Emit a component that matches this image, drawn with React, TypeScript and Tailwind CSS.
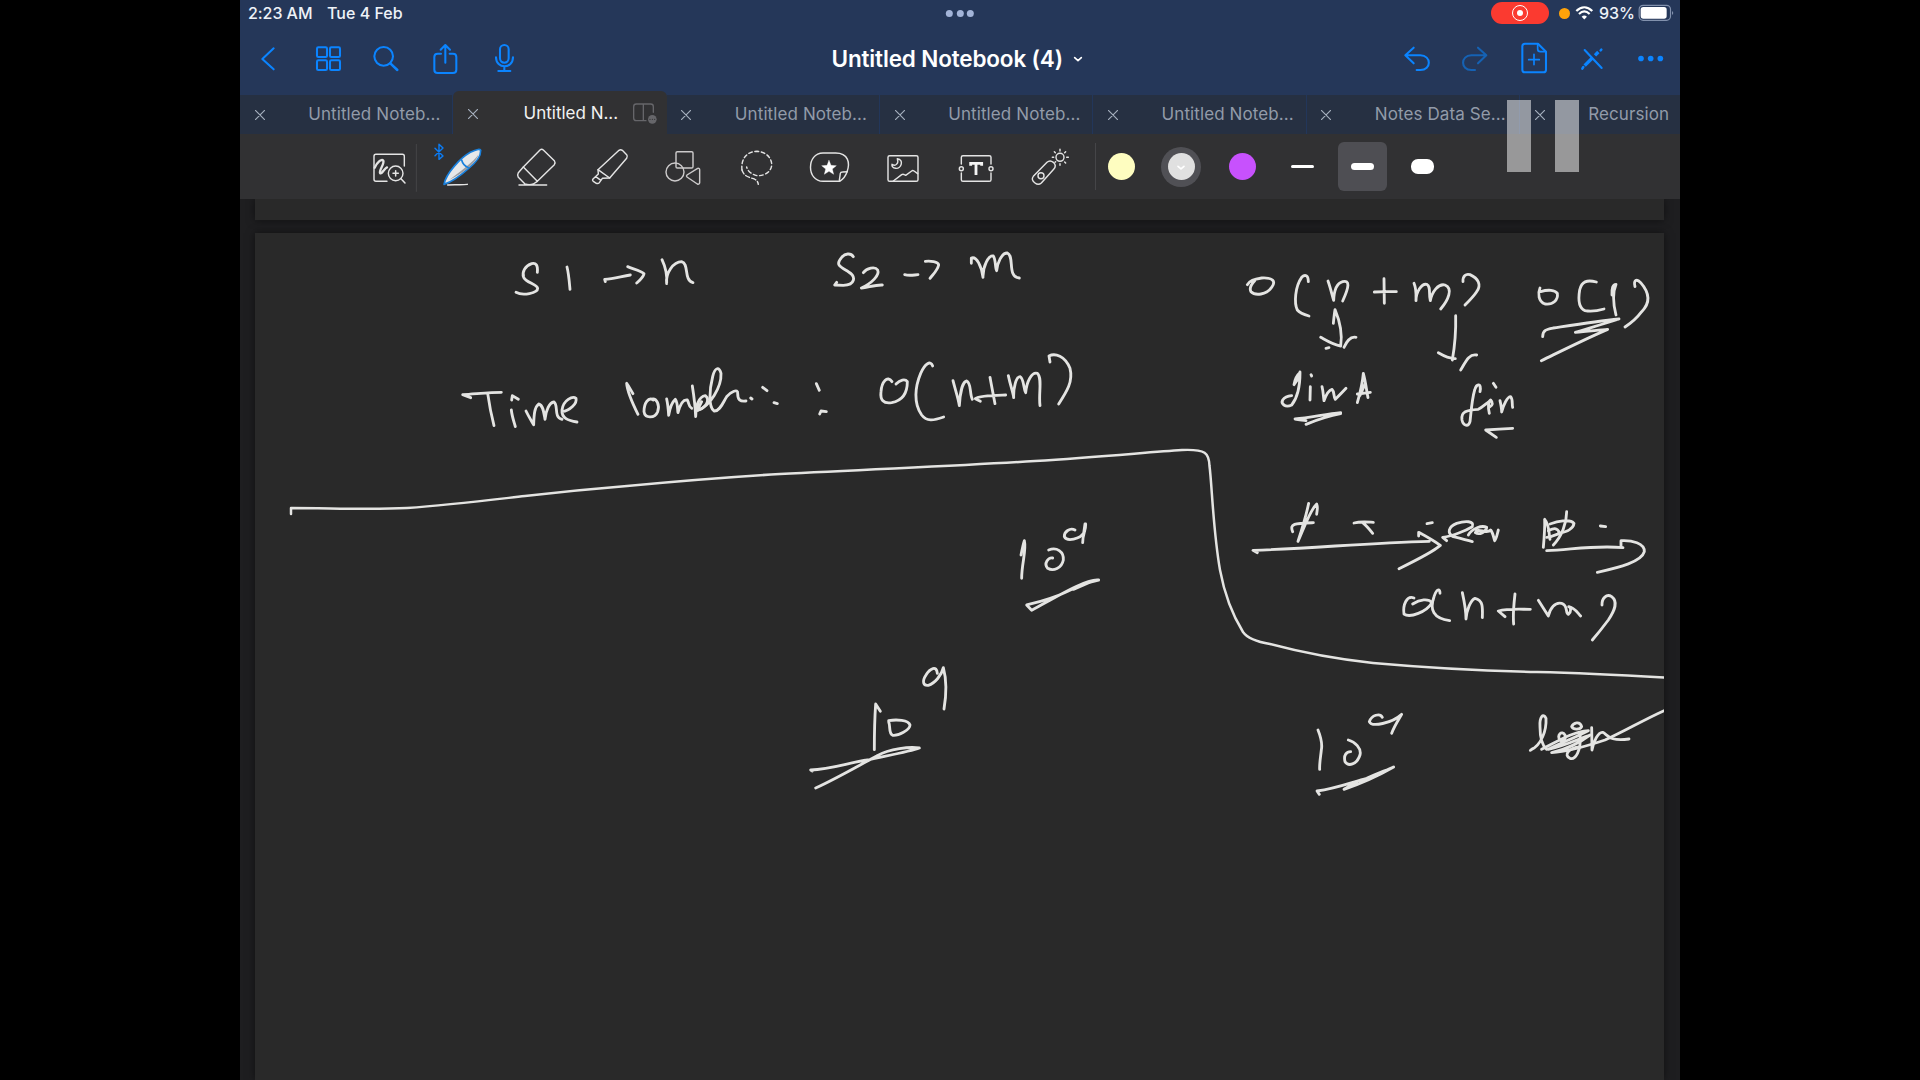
import React from "react";

type IconProps = { box: string; className: string; children: React.ReactNode };

function Glyph({ box, className, children }: IconProps) {
  return (
    <svg
      viewBox={box}
      className={className}
      fill="none"
      stroke="currentColor"
      strokeLinecap="round"
      strokeLinejoin="round"
    >
      {children}
    </svg>
  );
}

function NavIcon({ x, dim, children }: { x: number; dim?: boolean; children: React.ReactNode }) {
  return (
    <button className={dim ? "shrink-0 text-[#1562b4]" : "shrink-0 text-[#0b84ff]"}>
      <Glyph box={`${x} 90 176 195`} className="block h-[65px] w-[58.667px]">
        <g strokeWidth="6.2">{children}</g>
      </Glyph>
    </button>
  );
}

function Tool({ x, children }: { x: number; children: React.ReactNode }) {
  return (
    <button className="shrink-0 text-[#e4e4e4]">
      <Glyph box={`${x} 402 220 195`} className="block h-[65px] w-[73.333px]">
        <g strokeWidth="4.3">{children}</g>
      </Glyph>
    </button>
  );
}

function StatusBar() {
  return (
    <div className="relative flex h-[27px] items-center pb-[1px] text-[16px] font-medium text-[#eef2f8]">
      <span className="ml-[8px] w-[79px] tracking-[-0.05px]">2:23 AM</span>
      <span className="tracking-[0.02px]">Tue 4 Feb</span>
      <div className="absolute top-[10px] left-1/2 flex -translate-x-1/2 gap-[3.7px]">
        <i className="size-[7px] rounded-full bg-[#a3b4d8]" />
        <i className="size-[7px] rounded-full bg-[#a3b4d8]" />
        <i className="size-[7px] rounded-full bg-[#a3b4d8]" />
      </div>
      <div className="ml-auto flex items-center pr-[6px]">
        <div className="flex h-[22px] w-[58px] items-center justify-center rounded-full bg-[#fb3a30]">
          <span className="flex size-[16px] items-center justify-center rounded-full border-[1.7px] border-white">
            <i className="size-[6px] rounded-full bg-white" />
          </span>
        </div>
        <i className="ml-[10px] size-[11px] rounded-full bg-[#ffa30a]" />
        <Glyph box="1124 15 56 46" className="ml-[5px] h-[15.3px] w-[18.6px] text-white">
          <g strokeWidth="6.5" strokeLinecap="butt">
            <path d="M1128 33 C1143 18 1161 18 1176 33" />
            <path d="M1136 42 C1146 32 1158 32 1168 42" />
          </g>
          <path d="M1144 50 C1149 45 1155 45 1160 50 L1152 59 Z" fill="currentColor" stroke="none" />
        </Glyph>
        <span className="ml-[5px] w-[35px] text-[16px] tracking-[-0.1px]">93%</span>
        <Glyph box="1312 13 108 54" className="ml-[4px] h-[18px] w-[36px]">
          <rect x="1315.500" y="17" width="94" height="45" rx="12" stroke="#8291ad" strokeWidth="3.500" />
          <rect x="1320" y="22" width="78" height="35" rx="8" fill="#fff" stroke="none" />
          <path d="M1414 34 C1419 37 1419 43 1414 46 Z" fill="#8291ad" stroke="none" />
        </Glyph>
      </div>
    </div>
  );
}

function NavBar() {
  return (
    <div className="relative mt-[3px] flex h-[65px] justify-between">
      <div className="flex">
        <NavIcon x={0}>
          <path d="M101 145 L67 177 L101 208" />
        </NavIcon>
        <NavIcon x={176}>
          <rect x="230" y="142" width="30" height="29" rx="4" />
          <rect x="269" y="142" width="30" height="29" rx="4" />
          <rect x="230" y="181" width="30" height="29" rx="4" />
          <rect x="269" y="181" width="30" height="29" rx="4" />
        </NavIcon>
        <NavIcon x={352}>
          <circle cx="432" cy="169" r="28" />
          <path d="M452 190 L473 210" strokeWidth="7.500" />
        </NavIcon>
        <NavIcon x={528}>
          <path d="M603 161 H593 Q583 161 583 171 V209 Q583 219 593 219 H639 Q649 219 649 209 V171 Q649 161 639 161 H629" />
          <path d="M616 188 V136 M602 149 L616 135 L630 149" />
        </NavIcon>
        <NavIcon x={704}>
          <rect x="779" y="135" width="26" height="53" rx="13" />
          <path d="M767 172 C767 208 818 208 818 172 M792 200 V212 M774 213 H810" />
        </NavIcon>
      </div>
      <div className="flex">
        <NavIcon x={560}>
          <path d="M640 143 L615 166 L640 190 M616 166 H660 C694 166 694 210 660 210 H649" />
        </NavIcon>
        <NavIcon x={736} dim>
          <path d="M835 143 L860 166 L835 190 M859 166 H815 C782 166 782 210 815 210 H826" />
        </NavIcon>
        <NavIcon x={912}>
          <path d="M1014 131 H975 Q967 131 967 139 V209 Q967 217 975 217 H1030 Q1038 217 1038 209 V155 Z" />
          <path d="M1013 132 V147 Q1013 155 1021 155 H1037 M1002 163 V194 M986 179 H1018" strokeWidth="5" />
        </NavIcon>
        <NavIcon x={1088}>
          <path d="M1153 150 L1204 204" />
          <path d="M1153 197 L1176 174 M1184 166 L1194 156" strokeWidth="10" strokeLinecap="butt" />
          <path d="M1149 201 L1146 206 M1201 151 L1203 149" strokeWidth="7.500" />
        </NavIcon>
        <NavIcon x={1264}>
          <g fill="currentColor" stroke="none">
            <circle cx="1324" cy="175.500" r="8.500" />
            <circle cx="1353" cy="175.500" r="8.500" />
            <circle cx="1382" cy="175.500" r="8.500" />
          </g>
        </NavIcon>
      </div>
      <div className="absolute top-0 left-[591.500px] flex h-[57px] items-center text-white">
        <h1 className="w-[241.500px] text-[22.5px] font-semibold tracking-[-0.150px] whitespace-nowrap">
          Untitled Notebook (4)
        </h1>
        <Glyph box="0 0 30 20" className="mt-[2px] h-[6.7px] w-[10px]">
          <path d="M5 5 L15 14 L25 5" strokeWidth="5" />
        </Glyph>
      </div>
    </div>
  );
}

function CloseMark() {
  return (
    <Glyph box="0 0 30 30" className="size-[10px] shrink-0 text-[#a5afbe]">
      <path d="M1 1 L29 29 M29 1 L1 29" strokeWidth="3.500" />
    </Glyph>
  );
}

function Tab({ label }: { label: string }) {
  return (
    <div className="flex h-[39px] w-[213.333px] shrink-0 items-center border-r border-[#22365a] bg-[#263042] pt-[1px] pl-[14.700px]">
      <CloseMark />
      <span className="ml-[43.500px] text-[17px] tracking-[0.100px] whitespace-nowrap text-[#929ba9]">{label}</span>
    </div>
  );
}

function TabBar() {
  return (
    <div className="flex h-[39px] w-full items-end bg-[#253759]">
      <Tab label="Untitled Noteb..." />
      <div className="flex h-[43px] w-[213.333px] shrink-0 items-center rounded-t-[6px] bg-[#313133] pt-[2px] pl-[14.700px]">
        <CloseMark />
        <span className="ml-[45.500px] w-[95px] text-[17px] whitespace-nowrap text-[#f2f2f2]">Untitled N...</span>
        <Glyph box="1176 305 78 68" className="ml-[13px] h-[22.700px] w-[26px] text-[#66666a]">
          <path d="M1218 361 H1189 Q1181 361 1181 353 V319 Q1181 311 1189 311 H1232 Q1240 311 1240 319 V336 M1210 311 V361" strokeWidth="4" />
          <circle cx="1237" cy="357" r="13" fill="currentColor" stroke="none" />
          <path d="M1230 357 h.1 M1237 357 h.1 M1244 357 h.1" stroke="#313133" strokeWidth="3.500" />
        </Glyph>
      </div>
      <Tab label="Untitled Noteb..." />
      <Tab label="Untitled Noteb..." />
      <Tab label="Untitled Noteb..." />
      <Tab label="Notes Data Se..." />
      <Tab label="Recursion" />
    </div>
  );
}

function ToolBar() {
  return (
    <div className="flex h-[65px] bg-[#313133] pl-[113.333px]">
      <Tool x={340}>
        <path d="M442 544 H409 Q403 544 403 538 V469 Q403 463 409 463 H488 Q494 463 494 469 V498" />
        <path d="M405 503 C412 488 425 475 431 482 C435 492 418 510 421 519 C427 524 434 505 442 502" strokeWidth="7" />
        <circle cx="468" cy="520" r="22" />
        <path d="M484 536 L496 549 M468 512 V528 M460 520 H476" strokeWidth="4.500" />
        <path d="M530 433 V574" stroke="#454548" strokeWidth="3" />
      </Tool>
      <Tool x={560}>
        <path d="M584 445 L608 468 L596 478 V433 L608 444 L584 467" stroke="#0b7cf5" />
        <path d="M622 555 C645 553 665 556 681 553" />
        <path
          d="M611 553 C617 520 660 474 690 457 C710 447 721 446 721 452 C722 468 704 490 684 506 C658 529 632 547 611 553 Z"
          fill="#e6e8ea"
          stroke="#1a80dc"
          strokeWidth="5"
        />
        <path d="M626 540 C655 520 700 485 715 463 C708 488 670 520 626 540 Z" fill="#9b9da2" stroke="none" />
        <path d="M664 480 C667 493 675 499 684 503" stroke="#1a80dc" strokeWidth="5" />
      </Tool>
      <Tool x={780}>
        <path d="M850 501 L900 450 Q905 446 910 450 L943 482 Q947 488 943 494 L892 544 Z" />
        <path d="M850 501 L835 518 Q831 525 835 532 L855 552 Q868 556 880 552 L892 544 M837 555 H920" />
      </Tool>
      <Tool x={1000}>
        <path d="M1075 509 L1138 451 Q1143 447 1148 451 L1161 464 Q1165 469 1161 475 L1110 534 Z" />
        <path d="M1075 509 L1076 522 L1060 537 Q1057 541 1061 544 L1070 550 Q1075 552 1079 548 L1088 535 L1110 534 M1068 530 L1084 541" />
      </Tool>
      <Tool x={1220}>
        <g stroke="#cccacb">
          <rect x="1307" y="455" width="51" height="49" rx="4" />
          <circle cx="1304" cy="516" r="27" />
          <path d="M1340 531 Q1337 528 1340 525 L1372 505 Q1378 504 1378 509 V548 Q1377 554 1371 552 Z" />
        </g>
      </Tool>
      <Tool x={0}>
        <path
          d="M66 510 C62 475 82 454 111 454 C138 455 157 475 155 497 C152 517 132 528 111 527 C94 523 82 512 80 501"
          strokeDasharray="11 8"
        />
        <path d="M66 510 C72 530 88 532 103 537 C110 541 114 545 115 553" strokeDasharray="13 7" />
      </Tool>
      <Tool x={220}>
        <path d="M360 544 H310 C260 544 260 459 310 459 H348 C386 459 392 489 382 516 C377 531 368 539 360 544 Z" />
        <path d="M359 541 L362 520 Q363 516 368 516 L383 515" />
        <path
          d="M328 481 L334 496 L350 497 L338 507 L342 523 L328 514 L314 523 L318 507 L306 497 L322 496 Z"
          fill="#fff"
          stroke="#fff"
          strokeWidth="1"
        />
      </Tool>
      <Tool x={440}>
        <rect x="503" y="467" width="90" height="77" rx="5" />
        <path d="M519 543 L544 524 Q548 521 552 524 L556 526 L574 513 Q577 510 581 513 L592 521" />
        <path d="M531 476 C552 479 543 507 526 505 C517 504 514 498 515 493 C526 501 536 489 531 476 Z" />
      </Tool>
      <Tool x={660}>
        <path d="M724 492 V472 Q724 467 729 467 H808 Q813 467 813 472 V492 M724 519 V539 Q724 544 729 544 H808 Q813 544 813 539 V519" />
        <circle cx="724" cy="506" r="6" />
        <circle cx="813" cy="506" r="6" />
        <path d="M752 497 V490 H785 V497 M768 490 V525" strokeWidth="8.500" strokeLinecap="butt" strokeLinejoin="miter" stroke="#f4f4f4" />
      </Tool>
      <Tool x={880}>
        <path d="M941 529 L982 487 Q991 479 1001 487 Q1012 497 1002 508 L965 549 Q956 557 946 549 Q933 539 941 529 Z" />
        <circle cx="964" cy="527" r="9" />
        <circle cx="1021" cy="472" r="12" />
        <path d="M1021 448 V453 M1021 491 V496 M998 472 H1002 M1041 472 H1046 M1004 455 L1007 458 M1038 455 L1035 458 M1038 489 L1035 486 M1006 487 L1008 485" />
      </Tool>
      <div className="mt-[9px] ml-[8px] h-[47px] w-px bg-[#454548]" />
      <div className="mr-[4.700px] flex w-[51px] items-center justify-center">
        <i className="size-[27px] rounded-full bg-[#fefdc0]" />
      </div>
      <div className="flex w-[60px] items-center justify-center">
        <span className="flex size-[40px] items-center justify-center rounded-full bg-[#505055]">
          <span className="flex size-[27px] items-center justify-center rounded-full bg-[#e0e0e0] text-white">
            <Glyph box="0 0 24 16" className="mt-[2px] h-[5.300px] w-[8px]">
              <path d="M3 4 L12 12 L21 4" strokeWidth="5" />
            </Glyph>
          </span>
        </span>
      </div>
      <div className="flex w-[61.500px] items-center justify-center">
        <i className="size-[27px] rounded-full bg-[#c751fd]" />
      </div>
      <div className="flex w-[60px] items-center justify-center">
        <i className="h-[2.700px] w-[23px] rounded-full bg-white" />
      </div>
      <div className="flex w-[60px] items-center justify-center">
        <span className="flex size-[49px] items-center justify-center rounded-[6px] bg-[#4e4e53]">
          <i className="h-[7px] w-[23px] rounded-full bg-white" />
        </span>
      </div>
      <div className="flex w-[60px] items-center justify-center">
        <i className="h-[14.500px] w-[23px] rounded-[7px] bg-white" />
      </div>
    </div>
  );
}

type InkGroup = { at: string; strokes: string[] };

// Pen strokes, grouped by region of the page; each group is drawn at three units per pixel.
const ink: InkGroup[] = [
  {
    at: "translate(185 -3) scale(.33333)",
    strokes: [
      "M292 127 C294 105 288 98 275 101 C255 107 245 127 251 142 C258 158 292 162 293 175 C293 190 248 198 228 187",
      "M381 111 C386 130 388 155 390 178",
      "M496 155 L494 148 C520 146 545 139 571 135",
      "M563 110 C580 117 605 123 612 131 C610 142 600 150 590 159",
      "M666 89 C676 110 682 135 680 161 C676 130 700 95 725 95 C748 100 730 150 759 158",
      "M92 503 L68 494 C105 492 150 487 184 487 M143 490 C148 525 155 560 162 587",
      "M215 510 L217 497 L235 508 M214 540 C216 560 222 575 226 590",
      "M258 543 C266 560 274 572 281 584 C282 550 284 532 296 522 C310 525 312 550 315 568 C318 540 328 518 342 516 C356 525 340 562 366 568",
      "M366 545 C390 542 412 520 408 505 C398 497 370 510 366 540 C364 565 385 572 411 576",
      "M579 491 C572 480 566 468 560 460 C562 485 580 525 594 553",
      "M640 510 C625 500 612 520 612 545 C615 567 645 565 653 545 C660 525 650 503 635 507",
      "M680 507 C684 525 685 540 686 556 C690 530 698 515 706 508 C714 520 712 540 714 548 C720 525 730 508 742 510 C748 520 745 530 755 535",
      "M757 468 C762 500 766 530 767 560 C766 530 776 500 796 497 C812 510 797 535 772 541 L785 515",
      "M772 541 C810 530 845 470 843 430 C838 410 825 410 818 440 C808 480 805 530 822 543 C840 545 850 515 860 500 C872 485 895 475 893 490 C893 510 900 515 918 513",
      "M932 504 L936 507 M968 472 L981 482 M1002 518 L1012 521",
    ],
  },
  {
    at: "translate(545 -3) scale(.33333)",
    strokes: [
      "M160 80 C152 68 135 70 125 82 C105 105 120 110 145 125 C170 140 165 165 130 166 L104 165 L110 157",
      "M190 128 C200 115 225 108 233 120 C240 135 215 160 184 174 C205 172 225 164 247 165",
      "M314 134 C328 138 340 135 354 134 M376 94 C390 92 415 95 416 105 C412 122 400 132 390 145",
      "M514 100 L514 84 C530 78 545 110 549 142 C548 110 565 75 580 78 C588 90 585 115 590 122 C592 100 605 68 622 69 C645 80 620 140 658 144",
      "M49 461 L58 481 M59 552 L63 543 L79 545",
      "M276 455 C262 435 245 455 243 485 C240 510 250 522 275 518 C305 512 322 490 322 455 C315 445 300 450 288 462",
      "M398 408 C392 390 375 400 362 430 C345 470 340 520 365 555 C380 575 400 572 431 561",
      "M459 452 C466 480 475 505 478 527 C480 490 488 455 500 453 C515 460 508 490 517 508",
      "M541 514 L526 506 C540 496 580 496 617 495 M570 442 C575 470 580 495 585 521",
      "M625 437 C632 470 640 490 641 503 C640 475 648 440 660 440 C672 445 670 475 677 488 C680 455 695 425 712 430 C728 445 715 490 720 527",
      "M750 396 L747 378 C765 368 795 378 810 415 C820 455 800 485 776 522",
    ],
  },
  {
    at: "translate(965 17) scale(.33333)",
    strokes: [
      "M82 104 C90 92 100 88 125 84 C160 82 168 95 155 112 C140 135 105 138 93 125 C87 115 92 105 104 92",
      "M265 95 C265 75 255 72 245 82 C225 110 222 160 232 180 C240 190 250 193 267 198",
      "M324 93 C332 115 336 135 341 151 C342 125 350 100 368 95 C390 90 388 110 368 153",
      "M463 126 C485 124 505 125 529 125 M492 86 L493 160",
      "M582 100 C590 120 588 135 588 152 C588 125 605 100 620 103 C634 110 625 130 631 152 C636 125 655 100 675 105 C700 115 685 150 662 177",
      "M729 95 C728 78 738 70 750 74 C775 85 785 105 770 125 C760 140 748 152 735 165",
      "M340 220 C342 200 343 190 345 179 C358 210 368 250 362 288 C340 285 320 272 302 262 M372 292 C378 280 388 258 408 262 M318 295 L327 293",
      "M707 197 C708 240 704 290 697 330 M655 308 C672 318 690 325 706 326 M722 360 C735 340 745 310 770 315",
      "M960 114 C953 130 955 155 975 162 C1000 165 1015 150 1012 130 C1005 120 985 118 962 125",
      "M1129 96 C1100 88 1085 95 1079 120 C1074 150 1078 175 1095 182 C1115 186 1135 182 1152 177",
      "M1176 135 C1175 115 1178 103 1188 103 C1174 135 1183 175 1188 195",
      "M1245 110 C1240 90 1250 85 1262 98 C1290 130 1290 160 1265 185 C1250 205 1232 220 1215 231",
      "M968 260 C968 240 980 238 1000 234 C1060 225 1130 214 1197 207 C1150 222 1105 235 1066 247 C1100 245 1135 240 1163 238 C1100 265 1030 300 964 332",
      "M240 366 C238 385 228 395 222 404 C225 385 232 375 240 368 C240 400 235 440 215 465 C195 475 182 460 188 450 C195 440 205 438 215 437",
      "M273 374 L275 378 M271 410 L270 450",
      "M306 410 C310 425 310 440 312 452 C318 435 328 420 336 418 C344 425 340 440 346 448 C356 438 366 428 378 415",
      "M412 458 C420 430 428 395 430 370 C438 400 440 425 444 443 M412 432 L451 427 M420 436 L436 400",
      "M362 488 C320 492 270 503 225 507 C240 510 250 510 258 512 M362 491 C330 497 290 510 258 523",
      "M780 425 C785 400 770 398 764 420 C755 450 752 500 750 515 C745 532 730 528 726 510 C722 485 740 480 775 478 C790 470 800 458 812 452 M820 400 L828 412",
      "M808 490 C804 475 804 455 812 450 C820 458 818 466 810 470 M840 452 C843 465 845 475 845 486 C850 465 862 440 872 440 C880 450 875 465 878 472",
      "M878 535 C850 536 820 538 797 540 L829 562",
    ],
  },
  {
    at: "translate(965 247) scale(.33333)",
    strokes: [
      "M266 70 C258 110 245 150 234 184 C250 150 270 90 290 72 C295 85 290 95 290 103 M218 155 C208 130 225 130 280 128",
      "M402 129 C420 124 440 126 460 127 M428 128 C440 138 450 150 458 160 M621 131 L637 128",
      "M112 218 L99 211 C280 205 450 188 628 184 M596 168 L596 157 C620 170 645 185 661 196 C640 215 590 240 537 266",
      "M680 182 L668 172 C700 168 740 150 757 140 C765 122 735 122 710 130 C685 140 680 160 700 170 C720 175 740 180 757 185",
      "M745 165 C757 145 785 135 800 142 C800 155 778 166 766 158 C772 140 800 165 812 150 C820 160 822 178 824 182 C830 175 832 160 835 150",
      "M974 118 C975 145 972 180 970 202 M974 118 C988 135 985 150 990 178",
      "M985 152 C1000 145 1010 140 1020 160 C1015 160 1000 170 980 172 M1040 95 C1040 130 1025 170 1000 195 M990 132 C1010 125 1050 115 1062 130 C1060 145 1045 155 1015 160",
      "M1141 138 L1157 140",
      "M980 212 C1060 208 1130 195 1209 203 M1203 200 L1203 182 C1235 180 1275 190 1273 215 C1265 245 1200 262 1132 277",
      "M582 354 C560 345 548 375 552 402 C570 415 620 395 636 368 C625 355 600 358 578 372",
      "M660 340 C660 325 650 325 642 350 C628 390 640 415 689 422",
      "M727 338 C733 365 738 395 738 417 C740 390 752 360 765 355 C790 360 788 385 787 413",
      "M855 410 L835 393 C865 385 900 388 931 388 M885 342 C882 370 878 400 881 432",
      "M955 361 L985 408 C990 385 1005 365 1025 370 C1045 375 1035 400 1045 403 C1055 395 1053 382 1046 380 C1062 382 1070 395 1082 408",
      "M1146 375 C1145 355 1160 340 1175 350 C1195 365 1185 390 1165 420 C1150 440 1130 465 1117 480",
    ],
  },
  {
    at: "translate(525 267) scale(.33333)",
    strokes: [
      "M723 165 C726 150 730 130 733 122 C740 150 725 190 725 235",
      "M806 150 C830 140 852 155 850 180 C845 205 820 215 803 205 C790 190 805 172 818 174",
      "M885 90 C870 82 852 95 853 110 C860 125 900 120 914 95 M917 72 C918 90 908 100 908 128 M915 72 L911 100",
      "M956 240 C920 235 830 290 755 331 L740 315 C780 305 820 295 860 275 C900 255 930 245 956 240 M940 242 L880 268",
      "M283 749 C283 700 284 655 287 612 L301 634",
      "M326 665 C332 680 325 700 338 706 C355 708 390 690 390 675 C385 660 350 658 326 662",
      "M472 520 C470 495 450 505 438 525 C425 545 430 558 445 556 C465 550 485 525 490 503 C500 540 500 580 492 627",
      "M97 813 L92 810 C150 808 200 790 260 780 C330 765 390 755 418 744 C390 740 330 745 290 768 C230 800 170 835 107 864",
    ],
  },
  {
    at: "translate(1025 447) scale(.33333)",
    strokes: [
      "M114 150 C120 165 128 190 124 210 C122 230 118 250 119 268",
      "M205 180 C225 185 245 205 240 225 C230 255 205 260 195 245 C190 225 200 215 212 215",
      "M307 112 C300 98 275 105 268 125 C275 142 335 130 365 103 C355 120 342 140 335 160",
      "M118 343 L111 333 C170 325 220 305 260 295 C290 282 315 272 341 261 C290 290 245 310 192 328 L230 306",
      "M758 206 L751 211 C785 195 800 150 798 115 C790 98 778 110 780 140 C780 170 785 195 800 208",
      "M840 180 C830 165 845 150 855 165 C860 180 845 185 840 180 M905 140 C900 122 880 128 875 140 C880 150 900 150 905 140",
      "M900 160 C905 215 885 240 870 235 C850 225 865 205 900 200",
      "M785 208 C840 180 880 155 925 152 C880 175 840 190 805 208 C850 200 900 175 930 165 C890 195 850 210 815 218 C870 215 930 195 975 180 C1040 150 1090 120 1152 92",
      "M935 143 L936 210 C940 185 955 155 968 157 C985 165 985 185 1047 177",
    ],
  },
];

function NotebookPage() {
  return (
    <div className="ml-[15px] h-[847px] w-[1409px] bg-[#292929] shadow-[0_0_8px_rgba(0,0,0,0.5)]">
      <svg
        viewBox="0 0 1409 847"
        className="block h-[847px] w-[1409px]"
        fill="none"
        stroke="#e4e4e2"
        strokeLinecap="round"
        strokeLinejoin="round"
      >
        {ink.map((group) => (
          <g key={group.at} transform={group.at} strokeWidth="8.500">
            {group.strokes.map((d) => (
              <path key={d} d={d} />
            ))}
          </g>
        ))}
        <g transform="translate(-255 -233)" strokeWidth="2.500">
          <path d="M291 514 L291 508 C330 508 370 510 407 508 C450 505 490 500 525 496 C560 492 590 489 627 486 C680 481 730 477 780 474 C870 469 960 466 1035 461 C1100 457 1150 452 1182 450 C1206 449 1209 453 1209.500 466 C1212 485 1213 530 1220 570 C1225 597 1235 619 1243 632 C1248 639 1258 642 1270 644 C1300 652 1335 659 1373 663 C1440 669 1490 671 1537 672 C1580 673 1620 675 1664 677.500" />
        </g>
      </svg>
    </div>
  );
}

export default function App() {
  return (
    <div className="flex h-[1080px] w-[1920px] justify-center overflow-hidden bg-black font-['Inter',sans-serif]">
      <main className="relative h-[1080px] w-[1440px] overflow-hidden bg-[#1e1e20]">
        <header className="relative z-10">
          <div className="h-[95px] bg-[#253759]">
            <StatusBar />
            <NavBar />
          </div>
          <TabBar />
          <ToolBar />
        </header>
        <div className="mb-[13px] ml-[15px] h-[21px] w-[1409px] bg-[#292929] shadow-[0_0_8px_rgba(0,0,0,0.5)]" />
        <NotebookPage />
        <div className="absolute top-[100px] left-[1267px] z-20 flex gap-[24px]">
          <i className="h-[72px] w-[24px] bg-white/50" />
          <i className="h-[72px] w-[24px] bg-white/50" />
        </div>
      </main>
    </div>
  );
}
